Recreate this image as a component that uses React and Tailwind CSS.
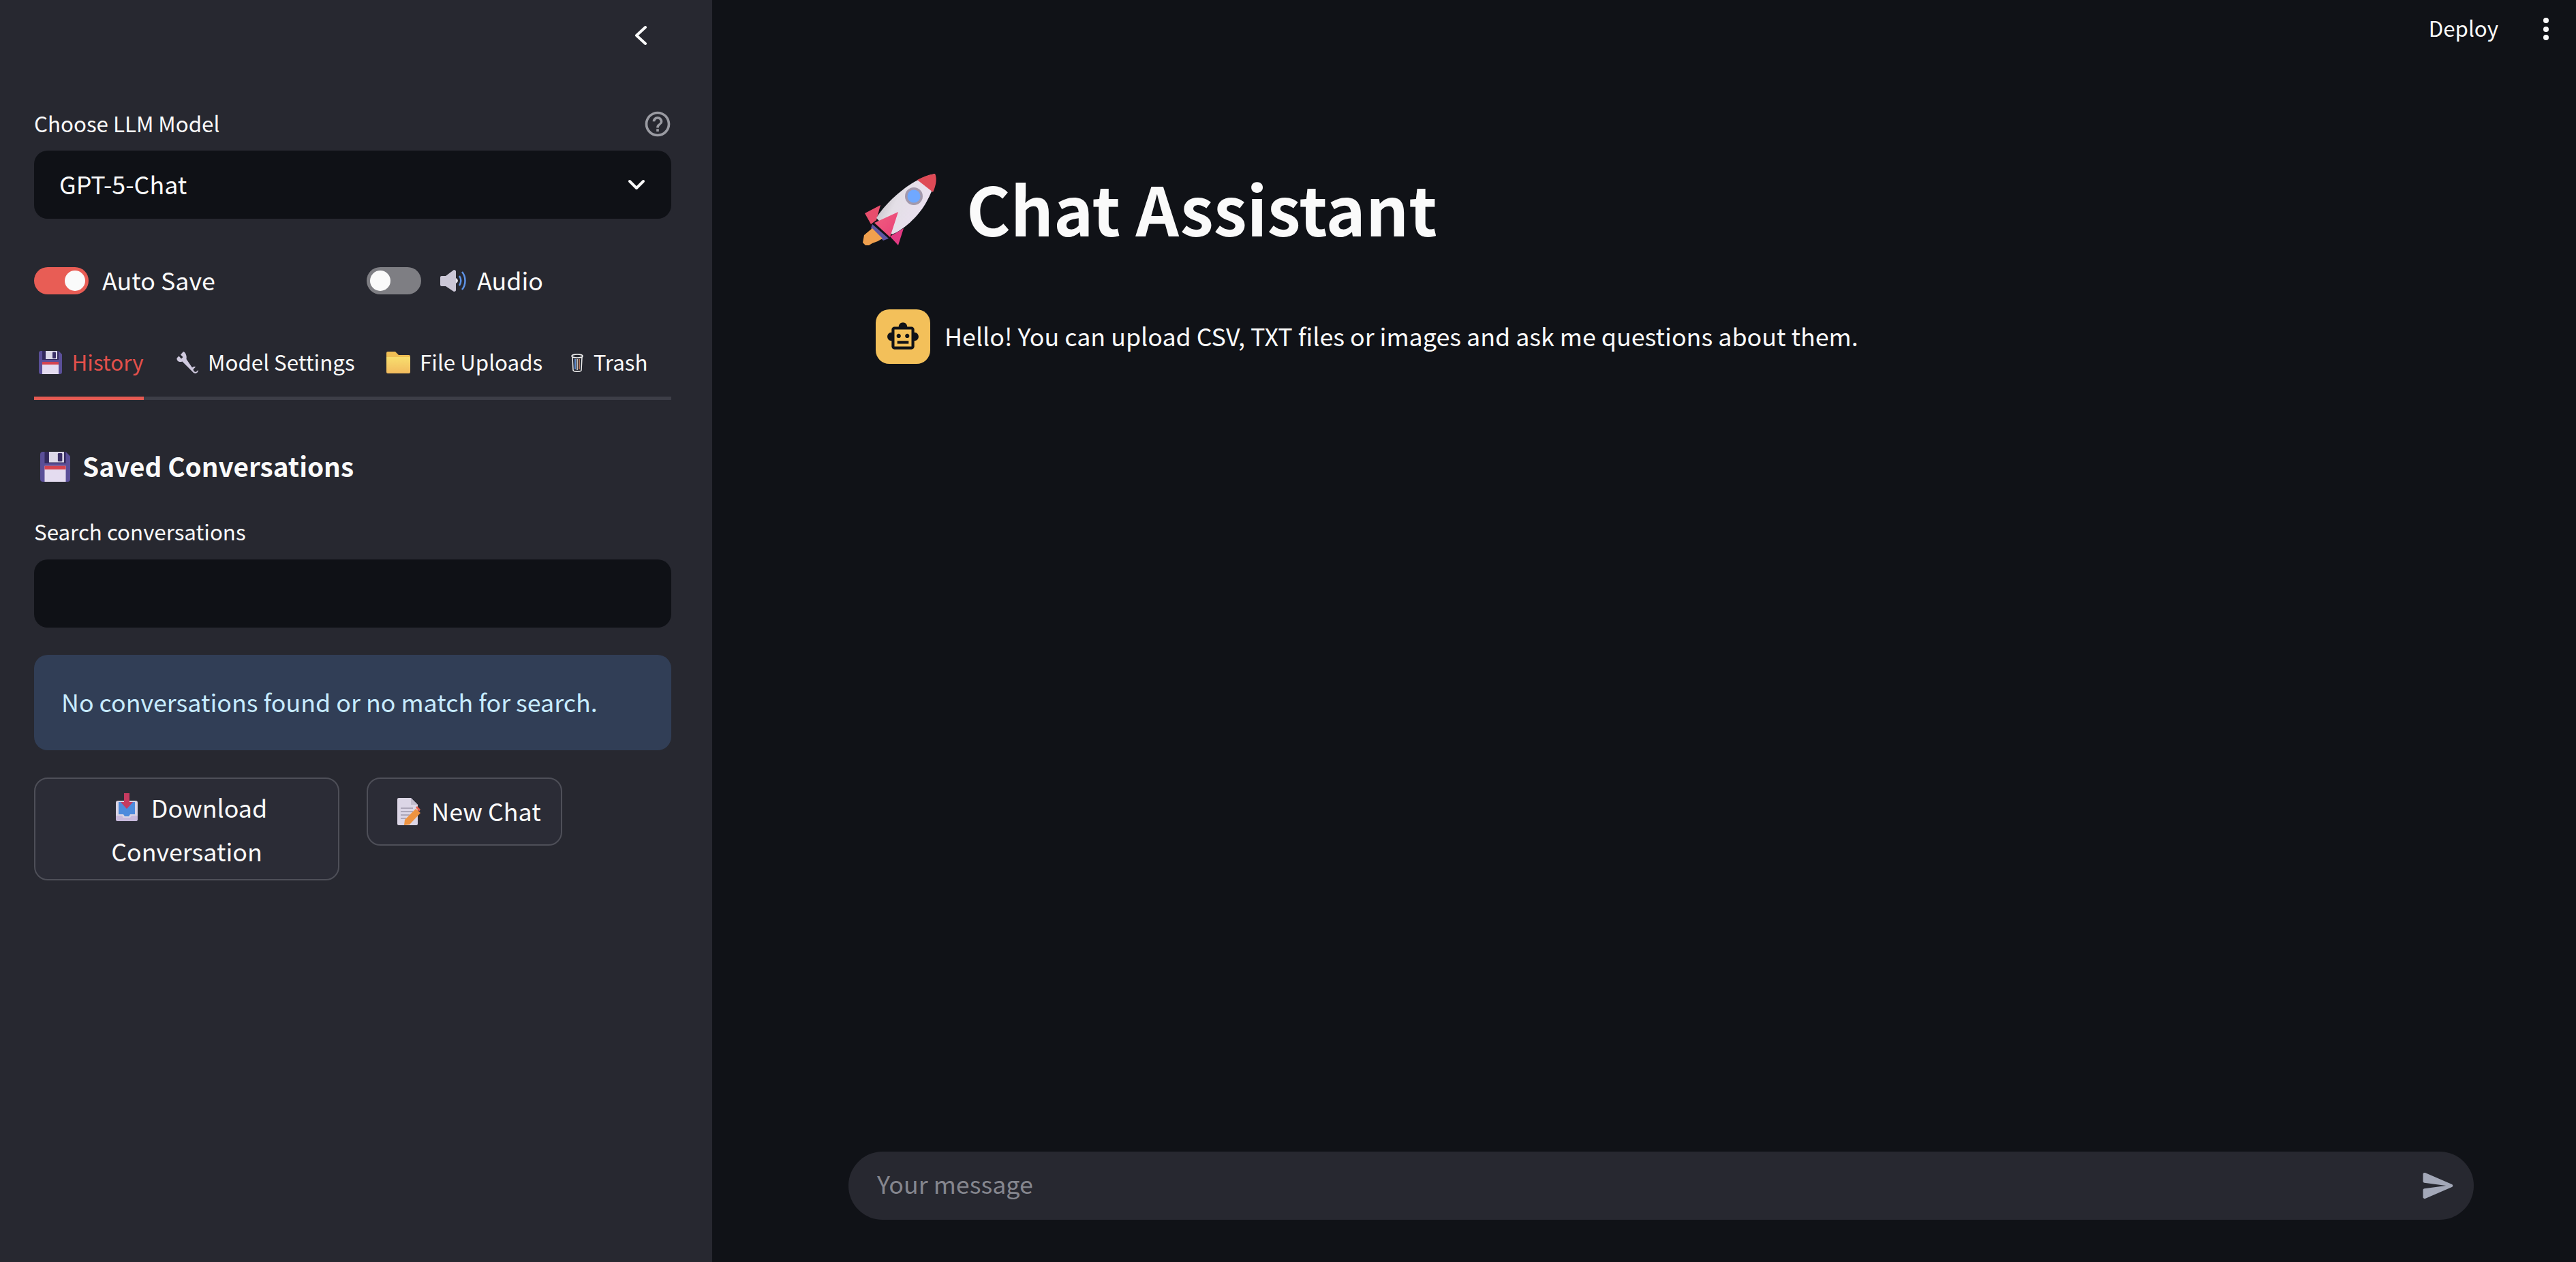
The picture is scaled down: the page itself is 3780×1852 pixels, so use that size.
import { useState } from 'react';

function Floppy({ size }) {
  return (
    <svg width={size} height={size} viewBox="0 0 34 34" className="shrink-0">
      <path d="M3 0h26l5 5v26a3 3 0 0 1-3 3H3a3 3 0 0 1-3-3V3a3 3 0 0 1 3-3z" fill="#5a4f98" />
      <rect x="5" y="0" width="24" height="13" fill="#332a5c" />
      <rect x="10" y="0" width="17" height="12" fill="#dcd8e8" />
      <rect x="20" y="1.5" width="5" height="9.5" rx="1" fill="#3a2f66" />
      <rect x="5" y="16" width="24" height="18" fill="#e4dcf0" />
      <rect x="5" y="16" width="24" height="4" fill="#d4434f" />
    </svg>
  );
}

function Wrench() {
  return (
    <svg width="32" height="32" viewBox="0 0 32 32" className="shrink-0">
      <path
        d="M10 0 6 4.500 9.500 8 7 10.500 3.500 6.500 0.500 9.500C0 13 3 15.500 7 15l1.500-.5L23 29c1.500 2 3 3 5 3 2.500-.5 4-2.500 4-5l-3.500 3-3-1-1-3 3.500-3.500c-2-1-4 0-5 1L14.500 11c1-4-1-10-4.500-11z"
        fill="#cfc9de"
      />
    </svg>
  );
}

function Folder() {
  return (
    <svg width="35" height="32" viewBox="0 0 35 32" className="shrink-0">
      <defs>
        <linearGradient id="folderFill" x1="0" y1="0" x2="0" y2="1">
          <stop offset="0" stopColor="#f8de6e" />
          <stop offset="1" stopColor="#f2bb5e" />
        </linearGradient>
      </defs>
      <path d="M2 0h11l5 5h15a2 2 0 0 1 2 2v4H0V2a2 2 0 0 1 2-2z" fill="#f0bf55" />
      <path d="M0 8h33a2 2 0 0 1 2 2v20a2 2 0 0 1-2 2H2a2 2 0 0 1-2-2z" fill="url(#folderFill)" />
    </svg>
  );
}

function Trash() {
  return (
    <svg width="18" height="27" viewBox="0 0 18 27" className="shrink-0" fill="none">
      <ellipse cx="9" cy="3.500" rx="8" ry="2.500" stroke="#f2f2f2" strokeWidth="1.500" />
      <path d="M2 5l1 19c0 1.500 3 2.300 6 2.300s6-.8 6-2.300l1-19" stroke="#f2f2f2" strokeWidth="1.500" />
      <path d="M6 8v15" stroke="#6fa8ff" strokeWidth="1.500" />
      <path d="M9 8v16" stroke="#e9e9e9" strokeWidth="1.500" />
      <path d="M12 8v15" stroke="#d98b6a" strokeWidth="1.500" />
    </svg>
  );
}

function Speaker() {
  return (
    <svg width="39" height="32" viewBox="0 0 39 32" className="shrink-0" fill="none">
      <path d="M2 9h6L20 0c1.500 0 3 1 3 2v28c0 1-1.500 2-3 2L8 24H2a2 2 0 0 1-2-2V11a2 2 0 0 1 2-2z" fill="#cbc7d6" />
      <path d="M23 12a5 5 0 0 1 3 4 5 5 0 0 1-3 4z" fill="#e9e6ef" />
      <path d="M28 9c3 4 3 10 0 14" stroke="#5e93e6" strokeWidth="2.500" />
      <path d="M32 3c6 7 6 19 0 26" stroke="#5e93e6" strokeWidth="2.500" />
    </svg>
  );
}

function Inbox() {
  return (
    <svg width="32" height="41" viewBox="0 0 32 41" className="inline-block align-[-5px] ml-[14px] mr-[20px]">
      <rect x="0" y="11" width="32" height="30" rx="3" fill="#d9d4e4" />
      <path d="M4 13h24v18h-7l-2 3h-6l-2-3H4z" fill="#4d8bdc" />
      <path d="M0 33h9l2 3h10l2-3h9v5a3 3 0 0 1-3 3H3a3 3 0 0 1-3-3z" fill="#c7b9dc" />
      <path d="M12 0h8v13h5L16 23 7 13h5z" fill="#c63b60" />
    </svg>
  );
}

function Memo() {
  return (
    <svg width="34" height="40" viewBox="0 0 34 40" className="shrink-0">
      <path d="M2 0h18l10 10v28a2 2 0 0 1-2 2H2a2 2 0 0 1-2-2V2a2 2 0 0 1 2-2z" fill="#dcd6e6" />
      <path d="M20 0l10 10H20z" fill="#c2bccd" />
      <path d="M5 15h18M5 20h18M5 25h13M5 30h8" stroke="#9d98aa" strokeWidth="1.500" />
      <path d="M27 16l7 6-16 17-8 1 1-8z" fill="#ee9340" />
      <path d="M27 14l2-2 5 5-2 3z" fill="#e8614f" />
    </svg>
  );
}

function Rocket() {
  return (
    <svg width="109" height="107" viewBox="0 0 109 107" className="shrink-0">
      <defs>
        <linearGradient id="rocketBody" x1="0" y1="0" x2="1" y2="0.500">
          <stop offset="0" stopColor="#a9a5ab" />
          <stop offset="0.450" stopColor="#e3dfe6" />
          <stop offset="1" stopColor="#ece0f2" />
        </linearGradient>
        <linearGradient id="rocketFin" x1="0" y1="0" x2="1" y2="1">
          <stop offset="0" stopColor="#f0607f" />
          <stop offset="1" stopColor="#ea3f78" />
        </linearGradient>
      </defs>
      <path d="M40 94 60 82 52 107z" fill="#e23a82" />
      <path d="M3 60 26 48 20 70 12 76z" fill="#e84e6c" />
      <path d="M14 76 38 97 30 100 12 82z" fill="#5d55a2" />
      <path d="M14 82 29 97 22 101 14 104 9 107 4 107 0 103 2 92z" fill="#f0a04e" />
      <path d="M106 2C84 6 60 22 40 42 30 52 24 60 20 67L43 91C60 84 80 66 92 46 100 32 108 14 106 2z" fill="url(#rocketBody)" />
      <path d="M106 2C98 3 89 6 80 11L103 29C108 18 109 8 106 2z" fill="#df4a56" />
      <circle cx="75" cy="35" r="13" fill="#a399ad" />
      <circle cx="75" cy="35" r="9.500" fill="#70a8ff" />
      <path d="M52 58 17 74 40 95z" fill="url(#rocketFin)" />
    </svg>
  );
}

function Tab({ icon, label, active, pad }) {
  return (
    <div className={`flex items-center gap-[14.5px] whitespace-nowrap pb-[20px] ${pad} ${active ? '-mb-[5px] h-[85px] border-b-[5px] border-[#e55a52] text-[#e2504b]' : 'h-[80px]'}`}>
      {icon}
      <span className="pb-[2px]">{label}</span>
    </div>
  );
}

export default function App() {
  const [search] = useState('');

  return (
    <div className="flex h-screen overflow-hidden bg-[#101217] text-[#fafafa] font-['Noto_Sans_CJK_SC','Source_Sans_Pro',sans-serif]">
      <aside className="w-[1045px] shrink-0 h-full bg-[#272830] pl-[50px] pr-[60px] pt-[38px]">
        <div className="flex justify-end pr-[35px]">
          <svg width="20" height="28" viewBox="0 0 20 28" fill="none">
            <path d="M17 2 4 14l13 12" stroke="#fafafa" strokeWidth="4" strokeLinecap="round" strokeLinejoin="round" />
          </svg>
        </div>

        <div className="mt-[94px] flex items-center justify-between h-[44px] text-[31.3px]">
          <label className="pb-[2px]">Choose LLM Model</label>
          <svg width="44" height="44" viewBox="0 0 24 24" className="-mr-[2px]" fill="#9a9ba2">
            <path d="M11 18h2v-2h-2v2zm1-16C6.480 2 2 6.480 2 12s4.480 10 10 10 10-4.480 10-10S17.520 2 12 2zm0 18c-4.410 0-8-3.590-8-8s3.590-8 8-8 8 3.590 8 8-3.590 8-8 8zm0-14c-2.210 0-4 1.790-4 4h2c0-1.100.9-2 2-2s2 .9 2 2c0 2-3 1.750-3 5h2c0-2.250 3-2.500 3-5 0-2.210-1.790-4-4-4z" />
          </svg>
        </div>
        <div className="mt-[17px] h-[100px] rounded-[20px] bg-[#0f1116] flex items-center justify-between pl-[37px] pr-[38px] text-[35.8px]">
          <span className="pb-[2px]">GPT-5-Chat</span>
          <svg width="26" height="16" viewBox="0 0 26 16" fill="none">
            <path d="M3 3l10 10L23 3" stroke="#fafafa" strokeWidth="4" strokeLinecap="round" strokeLinejoin="round" />
          </svg>
        </div>

        <div className="mt-[71px] grid grid-cols-[448px_448px] gap-x-[40px] text-[35.8px]">
          <div className="flex items-center h-[40px] gap-[20px]">
            <div className="w-[80px] h-[40px] rounded-full bg-[#e85d55] flex items-center justify-end pr-[5px]">
              <div className="w-[30px] h-[30px] rounded-full bg-[#fafafa]" />
            </div>
            <span className="pb-[3px]">Auto Save</span>
          </div>
          <div className="flex items-center h-[40px]">
            <div className="w-[80px] h-[40px] rounded-full bg-[#7e7e83] flex items-center pl-[5px] mr-[28px]">
              <div className="w-[30px] h-[30px] rounded-full bg-[#fafafa]" />
            </div>
            <Speaker />
            <span className="ml-[15px] pb-[3px]">Audio</span>
          </div>
        </div>

        <div className="mt-[70px] flex gap-[40px] text-[31.3px] border-b-[5px] border-[#3d3e47]">
          <Tab icon={<Floppy size={34} />} label="History" active pad="pl-[7px]" />
          <Tab icon={<Wrench />} label="Model Settings" pad="pl-[8px]" />
          <Tab icon={<Folder />} label="File Uploads" pad="pl-[6px]" />
          <Tab icon={<Trash />} label="Trash" pad="pl-[2px]" />
        </div>

        <div className="mt-[68px] flex items-center h-[60px] pl-[9px] gap-[18px] text-[38.7px] font-semibold">
          <Floppy size={44} />
          <h3 className="pb-[4px]">Saved Conversations</h3>
        </div>

        <label className="mt-[44px] flex items-center h-[44px] pb-[2px] text-[31.3px]">Search conversations</label>
        <input
          readOnly
          value={search}
          className="mt-[18px] block w-full h-[100px] rounded-[20px] bg-[#0f1116] px-[38px] text-[36px] outline-none"
        />

        <div className="mt-[40px] h-[140px] rounded-[20px] bg-[#313e56] text-[#c7ebff] text-[35.8px] flex items-center pl-[40px] pb-[3px]">
          No conversations found or no match for search.
        </div>

        <div className="mt-[40px] flex items-start gap-[40px] text-[35.8px]">
          <button className="w-[448px] h-[151px] rounded-[20px] border-[2.5px] border-[#4e4f58] bg-[#2b2c36] px-[30px] text-center leading-[64px]">
            <span className="block -mt-[2px]">
              <Inbox />
              Download Conversation
            </span>
          </button>
          <button className="w-[287px] h-[100px] rounded-[20px] border-[2.5px] border-[#4e4f58] bg-[#2b2c36] flex items-center justify-center gap-[16px] pl-[14px]">
            <Memo />
            <span className="pb-[3px]">New Chat</span>
          </button>
        </div>
      </aside>

      <main className="flex-1 h-full flex flex-col">
        <header className="h-[85px] shrink-0 flex items-center justify-end text-[31.3px]">
          <span className="pb-[3px]">Deploy</span>
          <div className="ml-[66px] mr-[40px] flex flex-col gap-[4.500px]">
            <div className="w-[8px] h-[8px] rounded-full bg-[#fafafa]" />
            <div className="w-[8px] h-[8px] rounded-full bg-[#fafafa]" />
            <div className="w-[8px] h-[8px] rounded-full bg-[#fafafa]" />
          </div>
        </header>

        <div className="flex-1 flex flex-col pl-[200px] pr-[150px]">
          <div className="mt-[166px] pl-[21px] flex items-center h-[110px] gap-[43px]">
            <Rocket />
            <h1 className="text-[98.8px] font-bold leading-none pb-[4px]">Chat Assistant</h1>
          </div>

          <div className="mt-[93px] pl-[40px] flex items-center gap-[21px] text-[35.8px]">
            <div className="w-[80px] h-[80px] rounded-[20px] bg-[#f3c05a] flex items-center justify-center">
              <svg width="50" height="50" viewBox="0 0 24 24" fill="#101217">
                <path d="M20 9V7c0-1.100-.9-2-2-2h-3c0-1.660-1.340-3-3-3S9 3.340 9 5H6c-1.100 0-2 .9-2 2v2c-1.660 0-3 1.340-3 3s1.340 3 3 3v4c0 1.100.9 2 2 2h12c1.100 0 2-.9 2-2v-4c1.660 0 3-1.340 3-3s-1.340-3-3-3zm-2 10H6V7h12v12zm-9-6c-.83 0-1.500-.67-1.500-1.500S8.170 10 9 10s1.500.67 1.500 1.500S9.830 13 9 13zm7.500-1.500c0 .83-.67 1.500-1.500 1.500s-1.500-.67-1.500-1.500.67-1.500 1.500-1.500 1.500.67 1.500 1.500zM8 15h8v2H8v-2z" />
              </svg>
            </div>
            <p className="pb-[3px]">Hello! You can upload CSV, TXT files or images and ask me questions about them.</p>
          </div>

          <div className="mt-auto mb-[62px] h-[100px] rounded-full bg-[#272830] flex items-center pl-[42px] pr-[25px]">
            <span className="flex-1 text-[35.8px] text-[#85868e] pb-[6px]">Your message</span>
            <svg width="54" height="54" viewBox="0 0 24 24" fill="#a3a8b8">
              <path d="M3.400 20.400l17.450-7.480a1 1 0 0 0 0-1.840L3.400 3.600a.993.993 0 0 0-1.390.91L2 9.120c0 .5.37.93.87.99L17 12 2.870 13.880c-.5.07-.87.5-.87 1l.01 4.610c0 .71.73 1.200 1.390.91z" />
            </svg>
          </div>
        </div>
      </main>
    </div>
  );
}
